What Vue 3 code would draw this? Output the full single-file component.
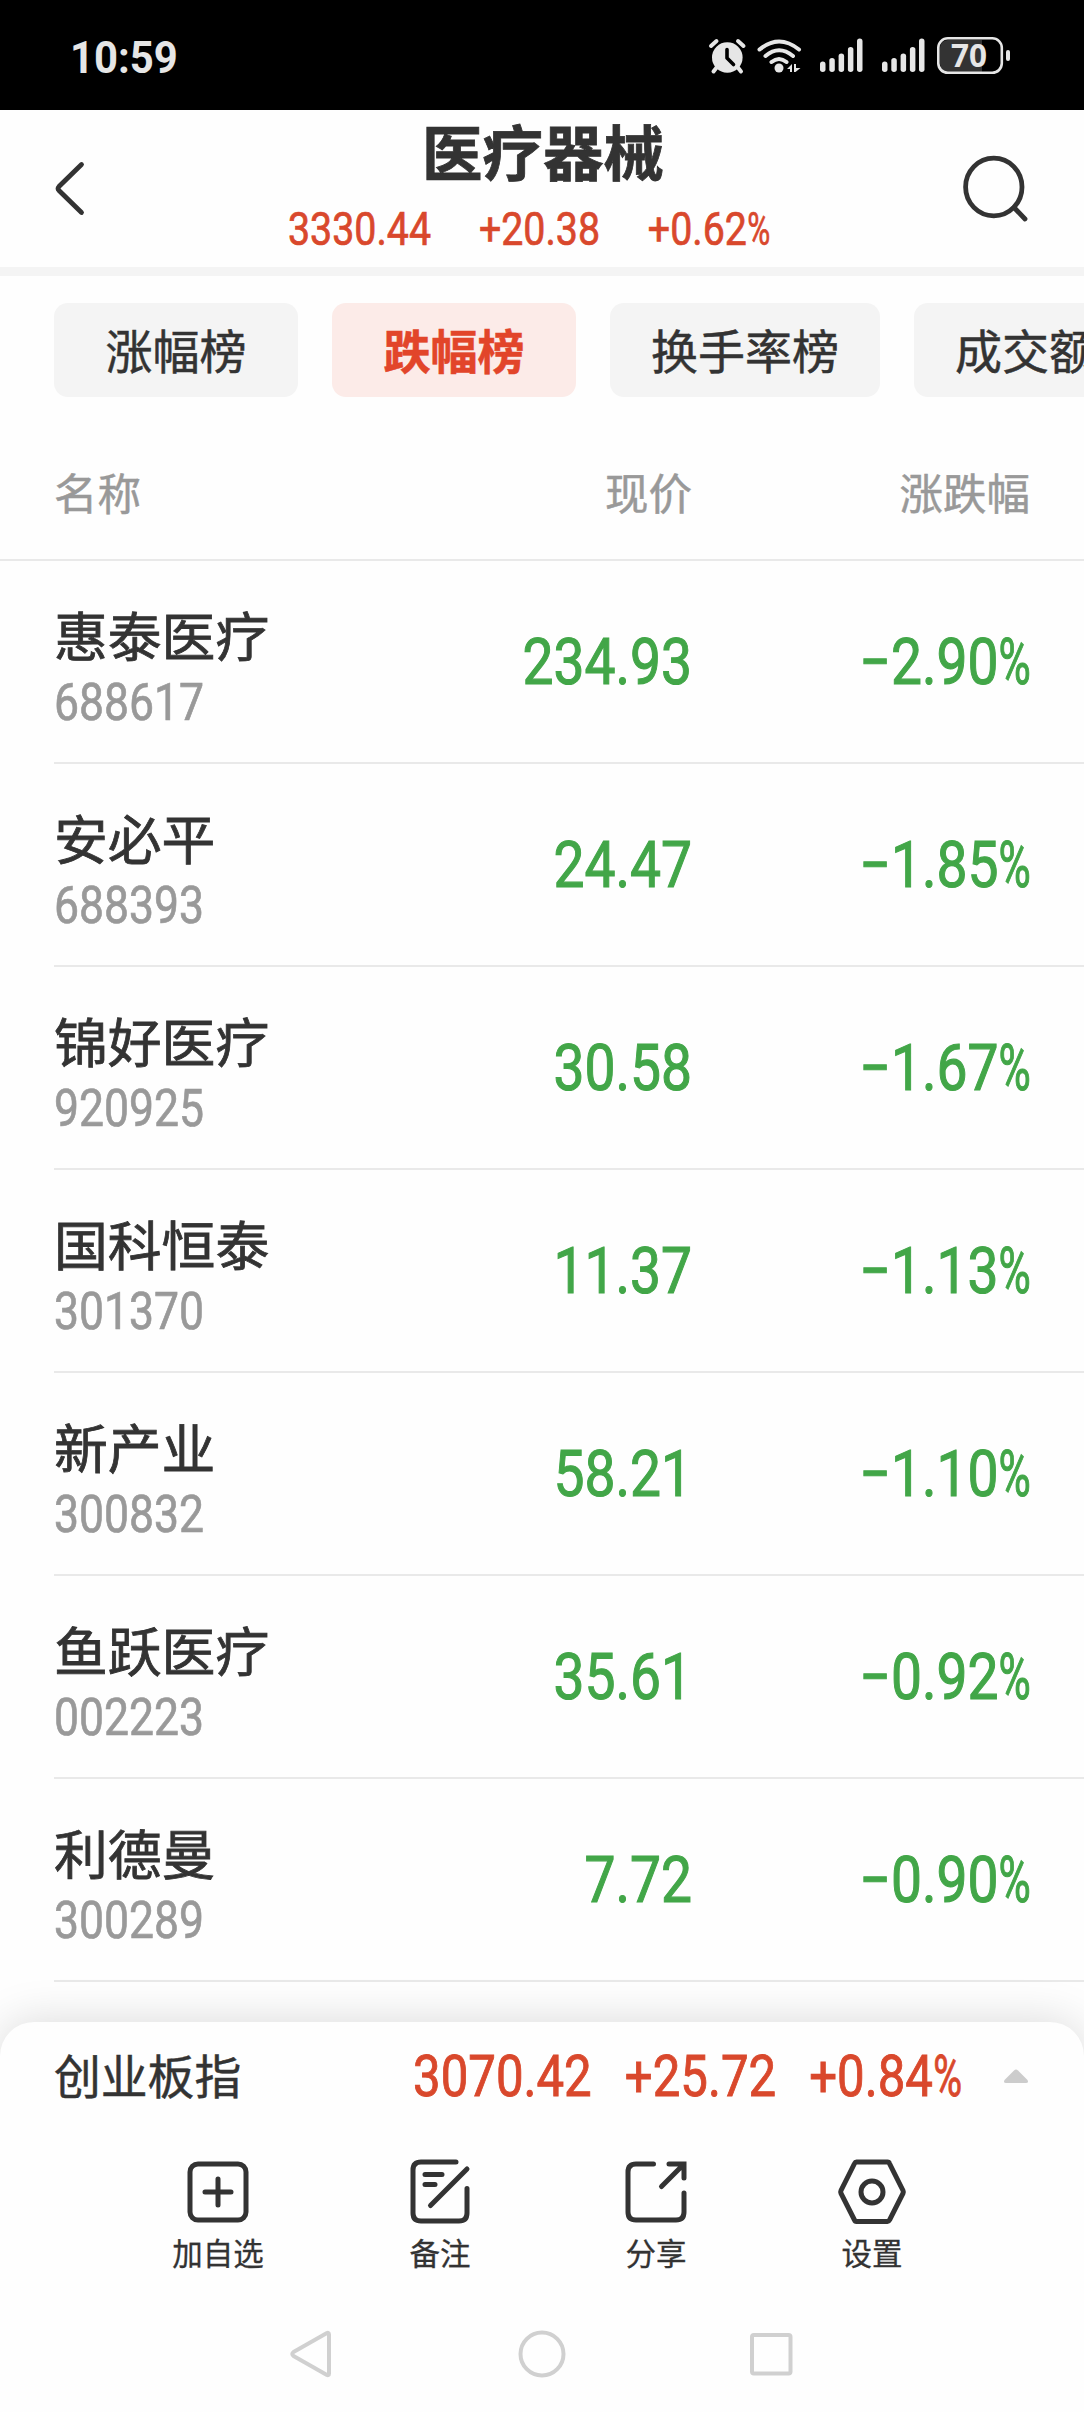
<script setup>
import { ref } from "vue"

const tabs = ["涨幅榜", "跌幅榜", "换手率榜", "成交额榜"]
const activeTab = ref("跌幅榜")

const stocks = ref([
  { name: "惠泰医疗", code: "688617", price: "234.93", change: "−2.90" },
  { name: "安必平", code: "688393", price: "24.47", change: "−1.85" },
  { name: "锦好医疗", code: "920925", price: "30.58", change: "−1.67" },
  { name: "国科恒泰", code: "301370", price: "11.37", change: "−1.13" },
  { name: "新产业", code: "300832", price: "58.21", change: "−1.10" },
  { name: "鱼跃医疗", code: "002223", price: "35.61", change: "−0.92" },
  { name: "利德曼", code: "300289", price: "7.72", change: "−0.90" },
])
</script>

<template>
  <div class="phone">
    <div class="statusBar">
      <div class="time">10:59</div>
      <svg class="statusIcons" width="310" height="50" viewBox="705 30 310 50" fill="#e6e6e6">
        <!-- alarm -->
        <circle cx="727.3" cy="57.5" r="15.3" />
        <path d="M711 46l5.500-5M743.500 46l-5.500-5M717 67l-3.500 4.500M737.500 67l3.500 4.500" stroke="#e6e6e6" stroke-width="4" stroke-linecap="round" />
        <path d="M727 49.500v8.500l6.500 6.500" fill="none" stroke="#000" stroke-width="3.600" stroke-linecap="round" stroke-linejoin="round" />
        <!-- wifi -->
        <g fill="none" stroke="#e6e6e6" stroke-width="4" stroke-linecap="round">
          <path d="M759.500 49.500q19.500-16 39.500 0M765.500 56q13.500-11.500 27.500 0M771.500 62q7.500-6 15 0" />
        </g>
        <circle cx="779" cy="68" r="4.500" />
        <path d="M787 69l5-5v8h-2v-3zM794 72v-8h2v4h4.500l-5 4z" />
        <!-- signal -->
        <g v-for="x in [820, 882]" :key="x">
          <rect :x="x" y="61.500" width="5.500" height="10.500" rx="2.700" />
          <rect :x="x + 9.3" y="58" width="5.500" height="14" rx="2.700" />
          <rect :x="x + 18.6" y="53.500" width="5.500" height="18.500" rx="2.700" />
          <rect :x="x + 27.9" y="47" width="5.500" height="25" rx="2.700" />
          <rect :x="x + 37" y="38.500" width="5.500" height="33.500" rx="2.700" />
        </g>
        <!-- battery -->
        <path d="M982 40v32h-34a8 8 0 0 1-8-8V48a8 8 0 0 1 8-8z" fill="#333" />
        <rect x="938.300" y="38.300" width="63.500" height="34.500" rx="9.500" fill="none" stroke="#e6e6e6" stroke-width="2.600" />
        <rect x="1006" y="50" width="4" height="11" rx="2" />
        <text class="batteryText" x="951" y="67.300" textLength="36" lengthAdjust="spacingAndGlyphs">70</text>
      </svg>
    </div>

    <header class="header">
      <svg class="back" width="40" height="60" viewBox="50 158 40 60">
        <path d="M81.500 164.500L59 186.500q-1.800 2 0 4L81.500 212.500" fill="none" stroke="#333" stroke-width="4.800" stroke-linecap="round" />
      </svg>
      <div class="titleBox">
        <h1>医疗器械</h1>
        <div class="stats num">
          <span>3330.44</span>
          <span>+20.38</span>
          <span>+0.62<i>%</i></span>
        </div>
      </div>
      <svg class="search" width="70" height="70" viewBox="960 152 70 70" fill="none" stroke="#333" stroke-width="4.800">
        <ellipse cx="993.800" cy="187" rx="28.200" ry="28.800" />
        <path d="M1014 207.500l11 11.500" stroke-linecap="round" />
      </svg>
    </header>

    <nav class="tabs">
      <button v-for="tab in tabs" :key="tab" :class="{ active: tab === activeTab }" @click="activeTab = tab">{{ tab }}</button>
    </nav>

    <section class="listHeader">
      <div>名称</div>
      <div>现价</div>
      <div>涨跌幅</div>
    </section>

    <section class="list">
      <div class="stock" v-for="stock in stocks" :key="stock.code">
        <div>
          <div class="name">{{ stock.name }}</div>
          <div class="code num">{{ stock.code }}</div>
        </div>
        <div class="price num">{{ stock.price }}</div>
        <div class="change num">{{ stock.change }}<i>%</i></div>
      </div>
    </section>

    <footer class="panel">
      <div class="index">
        <div class="indexName">创业板指</div>
        <div class="indexStats num">
          <span>3070.42</span>
          <span>+25.72</span>
          <span>+0.84<i>%</i></span>
        </div>
        <svg width="26" height="16" viewBox="0 0 26 16">
          <path d="M11 1.500q2-2 4 0l9.500 9.500q1.500 3-1.500 3H3q-3 0-1.500-3z" fill="#ccc" />
        </svg>
      </div>
      <div class="tools">
        <div class="tool">
          <svg width="70" height="70" viewBox="0 0 70 70">
            <rect x="7" y="7" width="56" height="56" rx="8" />
            <path d="M22 35h26M35 22v26" />
          </svg>
          加自选
        </div>
        <div class="tool">
          <svg width="70" height="70" viewBox="0 0 70 70">
            <path d="M51 5H16q-8 0-8 8v43q0 8 8 8h38q8 0 8-8V31.500M62 12L25.500 48.500M20 17.500h17M20 27.500h10" />
          </svg>
          备注
        </div>
        <div class="tool">
          <svg width="70" height="70" viewBox="0 0 70 70">
            <path d="M32.500 7H15q-8 0-8 8v40q0 8 8 8h40q8 0 8-8V36M48 7h15v14M61 9L40.500 29.500" />
          </svg>
          分享
        </div>
        <div class="tool">
          <svg width="70" height="70" viewBox="0 0 70 70">
            <path d="M19.500 5h31q1.500 0 2 1.500L66 33.500q.700 1.500 0 3L52.500 63q-.700 1.500-2 1.500h-31q-1.500 0-2-1.500L4 36.500q-.700-1.500 0-3L17.500 6.500q.700-1.500 2-1.500z" />
            <circle cx="35" cy="35" r="11" />
          </svg>
          设置
        </div>
      </div>
      <svg class="systemNav" width="1084" height="60" viewBox="0 2324 1084 60" fill="none" stroke="#d0d0d0" stroke-width="4" stroke-linejoin="round">
        <path d="M329 2334.500v39q0 2.500-2.500 1.200L293.500 2356q-2.500-2 0-4l33-18.700q2.500-1.300 2.500 1.200z" />
        <circle cx="542" cy="2354" r="21.500" />
        <rect x="752" y="2335" width="38.500" height="38.500" rx="2" />
      </svg>
    </footer>
  </div>
</template>

<style>
body {
  margin: 0;
  background: #fefefe;
}
</style>

<style scoped>
.phone {
  width: 1084px;
  height: 2412px;
  overflow: hidden;
  display: flex;
  flex-direction: column;
  background: #fefefe;
  color: #333;
  font-family: "Noto Sans CJK SC", sans-serif;
}

.num {
  font-family: Roboto, "Noto Sans CJK SC", sans-serif;
  font-weight: 400;
  -webkit-text-stroke: 0.7px currentColor;
  white-space: nowrap;
  transform: scaleX(0.855);
  transform-origin: left;
}

/* the percent sign is as narrow as a digit */
.num i {
  display: inline-block;
  font-style: normal;
  transform: scaleX(0.8);
  transform-origin: left;
  margin-right: -0.145em;
}

.statusBar {
  height: 110px;
  box-sizing: border-box;
  padding: 0 69px 0 70px;
  display: flex;
  justify-content: space-between;
  background: #000;
  color: #e6e6e6;
}

.time {
  font: 700 45px/116px Roboto, sans-serif;
  transform: scaleX(0.93);
  transform-origin: left;
}

.statusIcons {
  margin-top: 30px;
}

.batteryText {
  font: 700 32px "Noto Sans", sans-serif;
}

.header {
  height: 157px;
  display: flex;
  border-bottom: 9px solid #f4f4f4;
}

.back {
  margin: 48px 0 0 50px;
}

.titleBox {
  width: 870px;
}

h1 {
  margin: 4px 0 0 332px;
  font-size: 60.5px;
  line-height: 72px;
  font-weight: 700;
  -webkit-text-stroke: 0.8px currentColor;
}

.stats {
  display: flex;
  gap: 56px;
  margin: 16px 0 0 198px;
  font-size: 46px;
  line-height: 54px;
  color: #d9482c;
}

.search {
  margin-top: 42px;
}

.tabs {
  display: flex;
  gap: 34px;
  padding: 27px 0 0 54px;
}

.tabs button {
  flex: none;
  min-width: 244px;
  height: 94px;
  padding: 0 41px 3px;
  border: 0;
  border-radius: 14px;
  background: #f4f4f4;
  color: #333;
  font: 400 47px/90px "Noto Sans CJK SC", sans-serif;
  -webkit-text-stroke: 0.5px currentColor;
}

.tabs .active {
  background: #fcebe8;
  color: #e2452a;
  font-weight: 700;
}

.listHeader,
.stock {
  display: grid;
  grid-template-columns: 1fr 320px 338px;
  padding-right: 54px;
  border-bottom: 2px solid #e9e9e9;
}

.listHeader {
  height: 162px;
  padding-left: 54px;
  font-size: 43.5px;
  line-height: 190px;
  color: #999;
  text-align: right;
  -webkit-text-stroke: 0.5px currentColor;
}

.listHeader div:first-child {
  text-align: left;
}

.list {
  padding-left: 54px;
}

.stock {
  height: 201px;
}

.name {
  margin-top: 37px;
  font-size: 53.8px;
  line-height: 72px;
  font-weight: 400;
  -webkit-text-stroke: 0.8px currentColor;
}

.code {
  margin-top: 3px;
  font-size: 52px;
  line-height: 60px;
  color: #999;
}

.price,
.change {
  font-size: 64.5px;
  line-height: 203px;
  text-align: right;
  transform-origin: right;
  color: #42a648;
  -webkit-text-stroke-width: 1.1px;
}

.change {
  position: relative;
  left: 1px;
}

.panel {
  flex: 1;
  margin-top: 40px;
  display: flex;
  flex-direction: column;
  border-radius: 34px 34px 0 0;
  background: #fefefe;
  box-shadow: 0 0 46px rgba(0, 0, 0, 0.15);
}

.index {
  display: flex;
  align-items: center;
  height: 110px;
  padding-left: 54px;
}

.indexName {
  width: 359px;
  margin-top: -7px;
  font-size: 46.8px;
  -webkit-text-stroke: 0.5px currentColor;
}

.indexStats {
  display: flex;
  gap: 38px;
  width: 590px;
  font-size: 56.5px;
  color: #d9482c;
  transform: scaleX(0.87);
  -webkit-text-stroke-width: 0.9px;
}

.tools {
  display: grid;
  grid-template-columns: 228px 216px 216px 216px;
  padding: 25px 0 0 104px;
}

.tool {
  display: flex;
  flex-direction: column;
  align-items: center;
  font-size: 30.5px;
  line-height: 50px;
  -webkit-text-stroke: 0.3px currentColor;
}

.tool svg {
  fill: none;
  stroke: #333;
  stroke-width: 5;
  stroke-linecap: round;
}

.systemNav {
  margin-top: 47px;
}
</style>
